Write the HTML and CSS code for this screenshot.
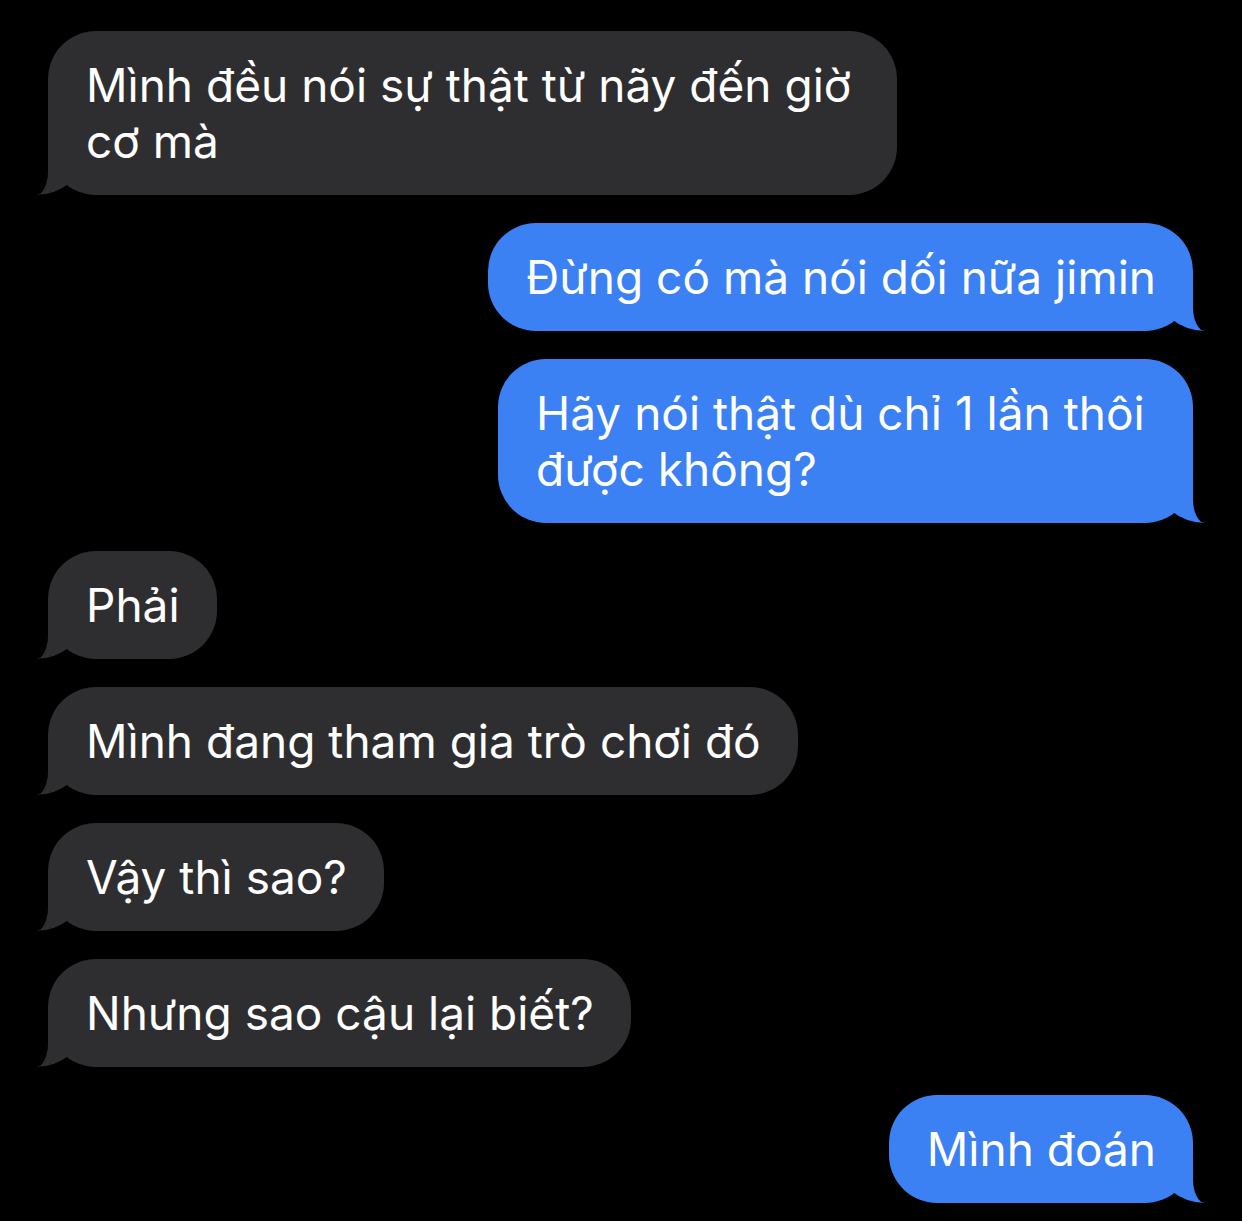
FILE: index.html
```html
<!DOCTYPE html>
<html lang="vi">
<head>
  <meta charset="UTF-8" />
  <meta name="viewport" content="width=device-width, initial-scale=1.0" />
  <title>Messages</title>
  <link rel="stylesheet" href="styles.css">
</head>
<body>
  <div class="chat">
    <div class="msg them wrap-lg">Mình đều nói sự thật từ nãy đến giờ<br>cơ mà</div>
    <div class="msg me">Đừng có mà nói dối nữa jimin</div>
    <div class="msg me wrap-md">Hãy nói thật dù chỉ 1 lần thôi<br>được không?</div>
    <div class="msg them">Phải</div>
    <div class="msg them">Mình đang tham gia trò chơi đó</div>
    <div class="msg them">Vậy thì sao?</div>
    <div class="msg them">Nhưng sao cậu lại biết?</div>
    <div class="msg me">Mình đoán</div>
  </div>
</body>
</html>
```
FILE: styles.css
```css
body {
  margin: 0;
  background: #000;
  font-family: 'Inter', 'Noto Sans', sans-serif;
  color: #fff;
}

.chat {
  display: flex;
  flex-direction: column;
  gap: 28px;
  padding: 31px 49px 20px 48px;
}

.msg {
  position: relative;
  padding: 26px 37px 26px 38px;
  font-size: 46px;
  line-height: 56px;
  border-radius: 48px;
  white-space: nowrap;
}

.wrap-lg {
  width: 774px;
}

.wrap-md {
  width: 620px;
}

.msg::before,
.msg::after {
  content: "";
  position: absolute;
  bottom: 0;
  height: 46px;
}

/* received */
.them {
  align-self: flex-start;
  background: #2e2e30;
}

.them::before {
  left: -12px;
  width: 46px;
  background: #2e2e30;
  border-bottom-right-radius: 46px 38px;
}

.them::after {
  left: -30px;
  width: 30px;
  background: #000;
  border-bottom-right-radius: 12px 24px;
}

/* sent */
.me {
  align-self: flex-end;
  background: #3b81f3;
}

.me::before {
  right: -12px;
  width: 46px;
  background: #3b81f3;
  border-bottom-left-radius: 46px 38px;
}

.me::after {
  right: -30px;
  width: 30px;
  background: #000;
  border-bottom-left-radius: 12px 24px;
}
```
